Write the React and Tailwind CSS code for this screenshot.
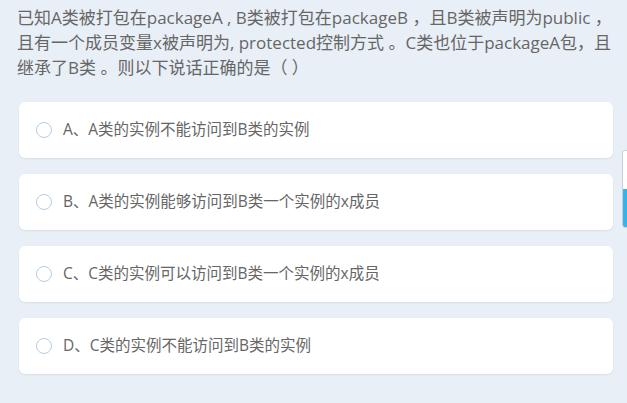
import React from 'react'

const options = [
  'A、A类的实例不能访问到B类的实例',
  'B、A类的实例能够访问到B类一个实例的x成员',
  'C、C类的实例可以访问到B类一个实例的x成员',
  'D、C类的实例不能访问到B类的实例',
]

const font = { fontFamily: '"Open Sans", "Noto Sans CJK SC", sans-serif' }

export default function App() {
  return (
    <div className="relative w-[627px] h-[403px] overflow-hidden bg-[#e9eff6]" style={font}>
      {/* 题干 */}
      <div className="pl-[17px] pt-[5px] text-[17px] leading-[25px] text-[#666] whitespace-nowrap">
        已知A类被打包在packageA , B类被打包在packageB ，且B类被声明为public ，
        <br />
        且有一个成员变量x被声明为, protected控制方式 。C类也位于packageA包，且
        <br />
        继承了B类 。则以下说话正确的是（ ）
      </div>

      {/* 选项 */}
      <div className="mt-[22px] ml-[19px] w-[594px] flex flex-col gap-[16px]">
        {options.map((text) => (
          <div
            key={text}
            className="h-[56px] bg-white rounded-[6px] shadow-[0_1px_2px_rgba(0,0,0,0.08)] flex items-center pl-[17px]"
          >
            <span className="w-[16px] h-[16px] rounded-full border-[1.5px] border-[#b5cbe2] bg-white" />
            <span className="ml-[11px] text-[15.5px] text-[#666]">{text}</span>
          </div>
        ))}
      </div>

      {/* 右侧滚动条 */}
      <div className="absolute left-[622px] top-[150px] w-[8px] h-[78px] rounded-l-[3px] border border-[#c8d2dc] bg-white overflow-hidden flex flex-col">
        <div className="h-[38px]" />
        <div className="flex-1 bg-[#36b3e8]" />
      </div>
    </div>
  )
}
